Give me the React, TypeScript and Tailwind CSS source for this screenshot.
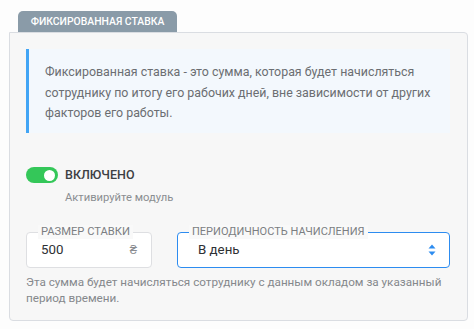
export default function App() {
  return (
    <div className="min-h-[329px] w-[474px] bg-[#fdfdfd] font-['Roboto',sans-serif]">
      <div className="flex pl-[18px] pt-[11px]">
        <div className="flex h-[21px] w-[159px] items-center justify-center rounded-t-[5px] bg-[#8a9ba8] text-[10.4px] font-medium uppercase text-white">
          Фиксированная ставка
        </div>
      </div>
      <div className="ml-[9px] mr-[6px] h-[289px] rounded-[4px] rounded-tl-none border border-[#dadde2] bg-[#f7f7f7] pl-[16px] pr-[17px] pt-[16px]">
        <div className="flex h-[84px] border-l-[3px] border-[#42a5f5] bg-[#f3f8fd] pl-[16px] pr-[10px] pt-[13px]">
          <p className="text-[12.4px] leading-[20.5px] text-[#6b6e72]">
            Фиксированная ставка - это сумма, которая будет начисляться сотруднику по итогу его рабочих дней, вне зависимости от других факторов его работы.
          </p>
        </div>

        <div className="mt-[33px] flex items-start gap-[7px]">
          <div className="mt-[1px] flex h-[16px] w-[32px] items-center justify-end rounded-full bg-[#34c759] pr-[3px]">
            <div className="h-[11px] w-[11px] rounded-full bg-white" />
          </div>
          <div>
            <div className="text-[12.5px] font-medium leading-[18px] text-[#3d4043]">ВКЛЮЧЕНО</div>
            <div className="mt-[6px] text-[11.2px] leading-[16px] text-[#8a8d91]">Активируйте модуль</div>
          </div>
        </div>

        <div className="mt-[26px] flex gap-[25px]">
          <div className="relative flex h-[36px] w-[126px] items-center rounded-[4px] border border-[#dedfe2] bg-white pl-[14px] pr-[14px]">
            <span className="absolute left-[11px] top-[-8px] bg-[#f9f9f9] px-[3px] text-[11.2px] leading-[14px] text-[#7b7e82]">РАЗМЕР СТАВКИ</span>
            <span className="flex-1 text-[13.3px] text-[#2e3134]">500</span>
            <span className="text-[13px] text-[#8a8d91]">₴</span>
          </div>
          <div className="relative flex h-[36px] flex-1 items-center rounded-[4px] border border-[#2d8cf0] bg-white pl-[20px] pr-[14px]">
            <span className="absolute left-[11px] top-[-8px] bg-[#f9f9f9] px-[3px] text-[11px] leading-[14px] text-[#7b7e82]">ПЕРИОДИЧНОСТЬ НАЧИСЛЕНИЯ</span>
            <span className="flex-1 text-[13.3px] text-[#2e3134]">В день</span>
            <svg width="8" height="12" viewBox="0 0 8 12" className="mr-[-1px]">
              <path d="M4 0.5 L7.5 4.5 H0.5 Z" fill="#2d8cf0" />
              <path d="M4 11.5 L7.5 7.5 H0.5 Z" fill="#2d8cf0" />
            </svg>
          </div>
        </div>

        <p className="mt-[6px] text-[11.7px] leading-[16px] text-[#85888c]">
          Эта сумма будет начисляться сотруднику с данным окладом за указанный период времени.
        </p>
      </div>
    </div>
  );
}
